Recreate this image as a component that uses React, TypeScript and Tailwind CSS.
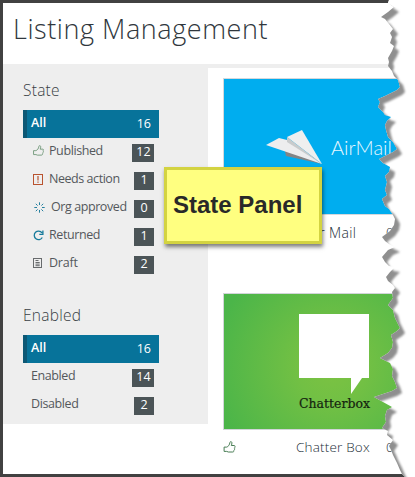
import React from 'react';

const EDGE =
  '389,0 388,3 394,7 388,12 381,17 385,19 389,24 393,29 390,33 392,37 390,43 394,46 392,51 388,58 389,62 388,66 392,71 394,76 398,80 400,87 397,90 385,96 378,99 380,102 378,107 383,112 385,115 391,117 387,121 385,125 386,130 388,137 393,142 397,149 393,152 385,156 379,159 383,163 390,167 389,172 385,176 387,182 385,190 387,195 382,199 385,206 389,209 393,215 395,219 394,225 390,231 382,237 385,241 389,244 395,247 388,250 382,257 385,262 389,266 395,267 390,272 386,277 388,281 393,285 395,288 392,292 393,298 388,305 393,310 395,318 397,322 400,328 397,331 391,335 393,342 392,348 388,353 380,358 390,363 393,369 392,376 395,382 397,388 392,391 374,397 383,402 392,407 387,410 385,416 386,422 382,428 388,431 387,435 393,440 389,446 391,450 393,455 397,463 400,470 402,474 405,477';

type IconName = 'thumb' | 'alert' | 'burst' | 'refresh' | 'doc';

function Thumb({ className }: { className: string }) {
  return (
    <svg className={className} viewBox="0 0 12 13" fill="none" stroke="currentColor" strokeWidth="1" strokeLinejoin="round">
      <path d="M.6 6.1h2.5c1.7-.5 2.9-2 3.4-4.8.1-1.1 1.8-.8 1.9.3.1 1-.2 2-.6 2.9h3c.9.2.9 1.2.2 1.6.6.4.4 1.5-.2 1.7.5.6.1 1.4-.5 1.7.2.8-.2 1.5-1 1.5H4.8l-1.6-.6H.6z" />
    </svg>
  );
}

function Icon({ name }: { name: IconName }) {
  if (name === 'thumb') return <Thumb className="h-[12px] w-[11px] text-[#71987a]" />;
  if (name === 'alert')
    return (
      <svg className="size-[11px] text-[#b9532f]" viewBox="0 0 11 11" fill="none" stroke="currentColor">
        <rect x=".5" y=".5" width="9" height="10" strokeWidth="1" />
        <path d="M5 2v4.5M5 7.5v1.3" strokeWidth="1.2" />
      </svg>
    );
  if (name === 'burst')
    return (
      <svg className="size-[11px] text-[#257f9e]" viewBox="0 0 11 11" stroke="currentColor" strokeWidth="1">
        <path d="M5.5.3v2.7M5.5 8v2.7M.3 5.5H3M8 5.5h2.7M1.8 1.8l1.8 1.8M7.4 7.4l1.8 1.8M1.8 9.2l1.8-1.8M7.4 3.6l1.8-1.8" />
      </svg>
    );
  if (name === 'refresh')
    return (
      <svg className="size-[11px] text-[#157a9b]" viewBox="0 0 11 11" fill="none" stroke="currentColor" strokeWidth="1.3">
        <path d="M9.3 7.5A4.3 4.3 0 1 1 9 2.8M9.9.6v3.7H6.3" />
      </svg>
    );
  return (
    <svg className="h-[11px] w-[10px] text-[#686b6d]" viewBox="0 0 10 11" fill="none" stroke="currentColor">
      <rect x=".5" y=".5" width="8" height="9" strokeWidth="1" />
      <path d="M2.5 2.5h3M2.5 4.5h4.2M2.5 6.1h4.2M2.5 7.7h4.2" />
    </svg>
  );
}

type RowProps = { label: string; count: number; icon?: IconName; tracking?: string; indent?: boolean };

function Row({ label, count, icon, tracking = '', indent }: RowProps) {
  return (
    <li className="flex h-7 items-center pr-[5px] pl-2">
      {icon && (
        <span className={`flex shrink-0 pb-[2px] ${indent ? 'w-5 pl-[3px]' : 'w-[18px] pl-[2px]'}`}>
          <Icon name={icon} />
        </span>
      )}
      <span className={`pb-[2px] text-[12.5px] leading-4 whitespace-nowrap text-[#54585c] ${tracking}`}>{label}</span>
      <span className={`mt-px ml-auto flex h-[18px] shrink-0 items-center justify-center bg-[#4b5457] text-[12.5px] text-white ${count > 9 ? 'w-[22px] pl-px' : 'w-5'}`}>
        {count}
      </span>
    </li>
  );
}

function Group({ title, rows }: { title: string; rows: RowProps[] }) {
  return (
    <section>
      <h2 className="h-[30px] text-[15.5px] leading-5 font-light tracking-[0.25px] text-[#383e44]">{title}</h2>
      <ul className="w-[136px]">
        <li className="flex h-7 items-center border-l-4 border-[#0c5875] bg-[#07739a] pr-[8px] pl-1 text-[13px] text-white">
          <span className="pb-[2px] text-[12.5px] font-semibold">All</span>
          <span className="ml-auto text-[12.5px]">16</span>
        </li>
        {rows.map((row) => (
          <Row key={row.label} {...row} />
        ))}
      </ul>
    </section>
  );
}

function TornEdge() {
  return (
    <svg className="absolute top-0 left-0 h-[477px] w-[415px]" viewBox="0 0 415 477">
      <defs>
        <clipPath id="outside">
          <polygon points={`${EDGE} 415,477 415,0`} />
        </clipPath>
        <filter id="soft" x="-10%" y="-5%" width="120%" height="110%">
          <feGaussianBlur stdDeviation="1.1" />
        </filter>
      </defs>
      <g clipPath="url(#outside)">
        <rect width="415" height="477" fill="#fff" />
        <polygon points={`350,2 ${EDGE} 350,477`} fill="#8f8f8f" filter="url(#soft)" transform="translate(5 5)" />
        <rect x="380" y="0" width="35" height="7" fill="#fff" />
      </g>
    </svg>
  );
}

export default function App() {
  return (
    <div className="relative h-[477px] w-[415px] overflow-hidden bg-white font-['Open_Sans','Noto_Sans',sans-serif]">
      <div className="flex h-[477px] flex-col border-y-[3px] border-l-[3px] border-[#414141]">
        <header className="h-[61px] pt-[8px] pl-[10px]">
          <h1 className="text-[27px] leading-9 font-light tracking-[0.56px] whitespace-nowrap text-[#30373d]">Listing Management</h1>
        </header>
        <div className="flex">
          <aside className="flex h-[360px] w-[205px] shrink-0 flex-col gap-[27px] bg-[#eee] pt-4 pl-5">
            <Group
              title="State"
              rows={[
                { label: 'Published', count: 12, icon: 'thumb', tracking: 'tracking-[-0.4px]' },
                { label: 'Needs action', count: 1, icon: 'alert', tracking: 'tracking-[-0.45px]' },
                { label: 'Org approved', count: 0, icon: 'burst', indent: true, tracking: 'tracking-[-0.42px]' },
                { label: 'Returned', count: 1, icon: 'refresh', tracking: 'tracking-[-0.4px]' },
                { label: 'Draft', count: 2, icon: 'doc', tracking: 'tracking-[-0.2px]' },
              ]}
            />
            <Group
              title="Enabled"
              rows={[
                { label: 'Enabled', count: 14, tracking: 'tracking-[-0.4px]' },
                { label: 'Disabled', count: 2, tracking: 'tracking-[-0.4px]' },
              ]}
            />
          </aside>
          <main className="min-w-0 flex-1 border-t-4 border-[#eee] pt-[10px] pl-[15px]">
            <article className="h-[215px]">
              <div className="flex h-[137px] w-[222px] border border-[#d4d8dc] bg-[#00adef] pt-[50px] pl-[42px]">
                <svg className="h-[36px] w-[58px] shrink-0" viewBox="0 0 58 36">
                  <path d="M18 18l2 9 36 8z" fill="#838485" />
                  <path d="M0 16L13 9l8 2 35 24z" fill="#ededee" />
                  <path d="M21 8l15-7 20 34z" fill="#eeefef" />
                  <path d="M21 8v5l35 22z" fill="#c8cbcc" />
                </svg>
                <span className="mt-[6px] ml-[7px] font-[Lato] text-[20px] leading-6 font-light tracking-[0.05px] text-[#e8f8ff]">AirMail</span>
              </div>
              <div className="flex h-[34px] items-center text-[13.5px] font-light text-[#222d36]">
                <span className="ml-[84px] w-[79px] text-[14px] tracking-[0.35px] whitespace-nowrap">Air Mail</span>
                <span>0</span>
              </div>
            </article>
            <article>
              <div className="flex h-[137px] w-[222px] flex-col border border-[#d2d5d9] bg-[radial-gradient(circle_at_108px_73px,#7cc242_0px,#72c044_35px,#4bb549_120px)] pt-[20px] pl-[75px]">
                <svg className="h-[81px] w-[70px]" viewBox="0 0 70 81">
                  <path d="M0 0h70v64h-7L52 80V64H0z" fill="#fff" />
                </svg>
                <span className="mt-[1px] w-[61px] font-['DejaVu_Serif'] text-[12.5px] leading-4 tracking-[0px] text-[#15240f] [-webkit-text-stroke:0.2px]">Chatterbox</span>
              </div>
              <div className="flex h-[34px] items-center text-[13.5px] font-light text-[#222d36]">
                <Thumb className="h-[13px] w-[13px] text-[#487d54]" />
                <span className="ml-[60px] w-[90px] tracking-[0.18px] whitespace-nowrap">Chatter Box</span>
                <span>0</span>
              </div>
            </article>
          </main>
        </div>
      </div>
      <TornEdge />
      <div className="absolute top-[167px] left-[164px] flex h-[77px] w-[158px] items-center border-[3px] border-[#d3d341] bg-[#ffff80] pb-[2px] pl-[6px] shadow-[1px_3px_4px_rgba(0,0,0,0.5)]">
        <span className="font-['Liberation_Sans',sans-serif] text-[24px] leading-7 font-bold whitespace-nowrap text-[#292929]">State Panel</span>
      </div>
    </div>
  );
}
